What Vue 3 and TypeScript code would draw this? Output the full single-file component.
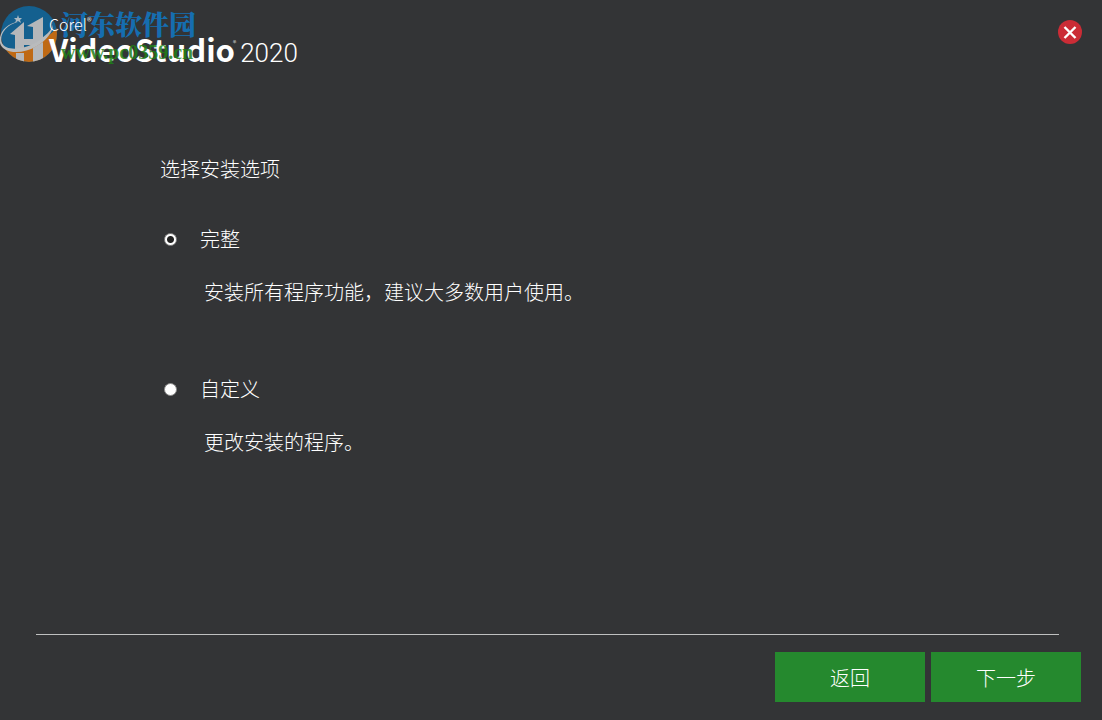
<script setup lang="ts">
import { ref } from 'vue'

interface InstallOption {
  id: string
  label: string
  description: string
}

const options: InstallOption[] = [
  { id: 'full', label: '完整', description: '安装所有程序功能，建议大多数用户使用。' },
  { id: 'custom', label: '自定义', description: '更改安装的程序。' },
]

const selected = ref('full')
</script>

<template>
  <div class="installer">
    <header class="header">
      <div class="brand">
        <div class="maker">Corel<sup>®</sup></div>
        <div class="product">
          <span class="name">VideoStudio</span><sup>®</sup><span class="year">2020</span>
        </div>
      </div>
      <div class="watermark">
        <svg class="emblem" viewBox="0 0 58 58" aria-hidden="true">
          <defs>
            <clipPath id="disc"><circle cx="29" cy="29" r="28" /></clipPath>
          </defs>
          <g clip-path="url(#disc)">
            <rect width="58" height="58" fill="#14608f" />
            <path d="M0 42C18 48 39 41 58 22V58H0Z" fill="#bf6914" />
            <path d="M10 29L24 17V45L15 46V30ZM27 21L43 12V34L33 40V22Z" fill="#b5b7ba" />
            <path d="M24 34H33V40H24ZM16 48H24V58H16ZM33 43L43 37V58H33Z" fill="#b5b7ba" />
          </g>
          <path d="M18 17C5 20-1 31 2 38C6 47 27 45 41 34C50 27 55 21 52 17C56 24 47 35 37 41C22 50 3 49 0 38C-2 29 6 18 18 17Z" fill="#b9bbbd" />
          <path d="M18 10L19 13H22L20 15L21 18L18 16L15 18L16 15L14 13H17Z" fill="#a9b8c2" />
        </svg>
        <div class="site">
          <span class="site-name">河东软件园</span>
          <span class="site-url">www.pc0359.cn</span>
        </div>
      </div>
      <button class="close" type="button" aria-label="关闭">
        <svg viewBox="0 0 24 24" aria-hidden="true">
          <path d="M6.500 7L17.500 18M17.500 7L6.500 18" stroke="#fff" stroke-width="2.400" fill="none" />
        </svg>
      </button>
    </header>

    <main class="content">
      <h1>选择安装选项</h1>
      <section v-for="option in options" :key="option.id" class="option">
        <label class="choice">
          <input v-model="selected" type="radio" name="install" :value="option.id" />
          <span>{{ option.label }}</span>
        </label>
        <p>{{ option.description }}</p>
      </section>
    </main>

    <footer class="footer">
      <div class="actions">
        <button type="button">返回</button>
        <button type="button">下一步</button>
      </div>
    </footer>
  </div>
</template>

<style>
body {
  margin: 0;
  background: #333436;
}
</style>

<style scoped>
.installer {
  display: flex;
  flex-direction: column;
  box-sizing: border-box;
  min-height: 100vh;
  background: #333436;
  color: #fff;
  font-family: "Noto Sans CJK SC", sans-serif;
  font-size: 20px;
  font-weight: 300;
  line-height: 30px;
}

.header {
  position: relative;
  display: flex;
  justify-content: space-between;
  align-items: flex-start;
  padding: 15px 20px 0 49px;
}

.brand {
  position: relative;
  z-index: 1;
}

.maker {
  font-size: 16px;
  line-height: 18px;
}

.maker sup {
  font-size: 10px;
  line-height: 0;
}

.product {
  display: flex;
  align-items: baseline;
  line-height: 32px;
}

.name {
  font-size: 31px;
  font-weight: 700;
}

.product sup {
  align-self: flex-start;
  margin-left: -2px;
  font-size: 7px;
  line-height: 20px;
}

.year {
  margin-left: 4px;
  font-family: Roboto, sans-serif;
  font-size: 26px;
  font-weight: 300;
}

.watermark {
  position: absolute;
  top: 5px;
  left: 0;
  display: flex;
  gap: 3px;
  pointer-events: none;
}

.emblem {
  width: 58px;
  height: 58px;
}

.site {
  display: flex;
  flex-direction: column;
}

.site-name {
  color: #156eb0;
  font-family: "Noto Serif CJK SC", "Noto Sans CJK SC", serif;
  font-size: 27px;
  font-weight: 900;
  line-height: 38px;
}

.site-url {
  position: relative;
  z-index: 2;
  color: rgba(32, 128, 22, 0.85);
  font-family: "Liberation Serif", serif;
  font-size: 20px;
  font-weight: 700;
  line-height: 18px;
}

.close {
  width: 24px;
  height: 24px;
  margin-top: 5px;
  padding: 0;
  border: 0;
  border-radius: 50%;
  background: #cb2c36;
}

.close svg {
  display: block;
}

.content {
  flex: 1;
  padding: 85px 160px 0;
}

h1 {
  margin: 0 0 40px;
  font-size: 20px;
  font-weight: inherit;
  line-height: 30px;
}

.option {
  margin-bottom: 67px;
}

.choice {
  display: flex;
  align-items: center;
  gap: 23px;
}

.choice input {
  appearance: none;
  box-sizing: border-box;
  width: 13px;
  height: 13px;
  margin: 0 0 0 4px;
  border: 1px solid #8b8b8b;
  border-radius: 50%;
  background: #fff;
}

.choice input:checked {
  background: radial-gradient(circle, #222 0 3px, #fff 4px);
}

.option p {
  margin: 23px 0 0 44px;
}

.footer {
  padding: 0 21px 18px 36px;
}

.footer::before {
  content: "";
  display: block;
  height: 1px;
  margin-right: 22px;
  background: #bfc0c0;
}

.actions {
  display: flex;
  justify-content: flex-end;
  gap: 6px;
  margin-top: 17px;
}

.actions button {
  width: 150px;
  height: 50px;
  padding: 2px 0 0;
  border: 0;
  background: #25892e;
  color: #fff;
  font: inherit;
}
</style>
